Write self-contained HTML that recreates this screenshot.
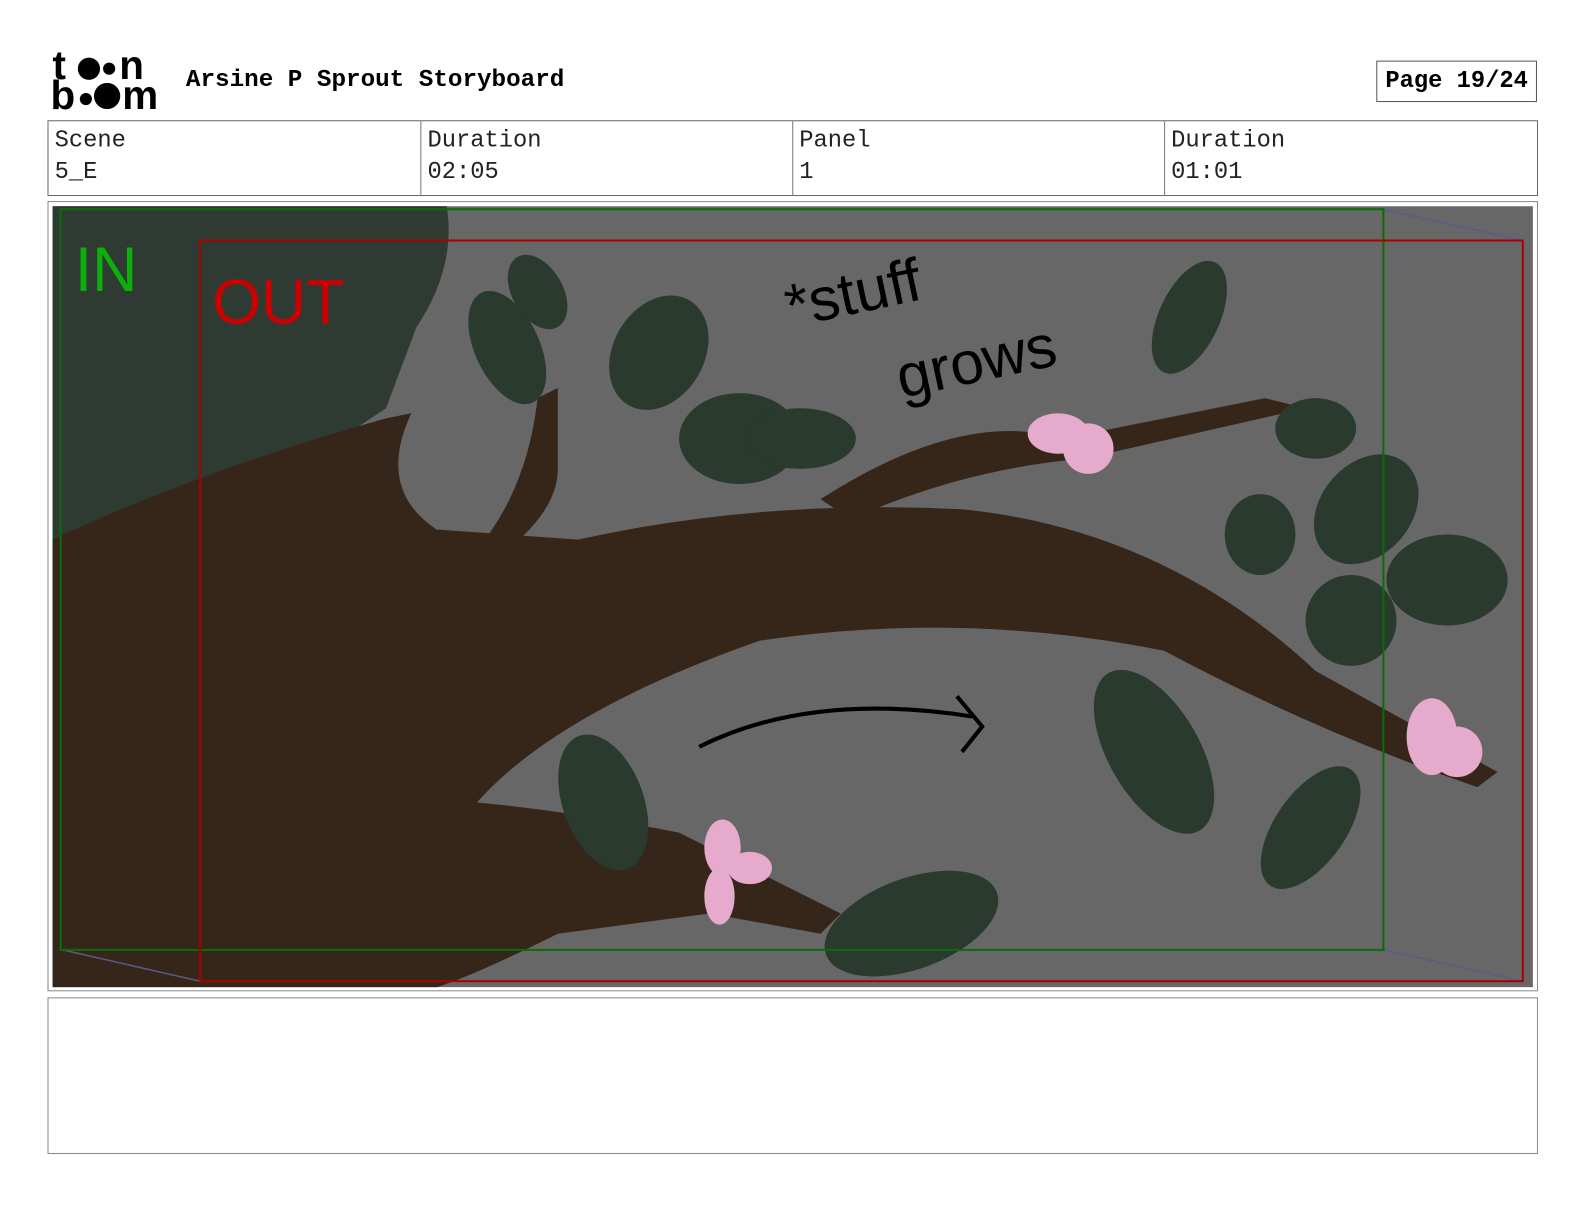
<!DOCTYPE html>
<html><head><meta charset="utf-8"><style>
body{margin:0;width:1584px;height:1224px;background:#fff;overflow:hidden}
#w{position:absolute;left:0;top:0;width:1568px;height:1212px;transform:scale(1.0105);transform-origin:0 0;font-family:"Liberation Mono",monospace}
.abs{position:absolute}
.cell{position:absolute;top:0;height:74px;border-left:1px solid #777;box-sizing:border-box;padding:4px 6px;font-size:23.5px;line-height:31px;color:#222}
</style></head><body><div id="w">
<svg class="abs" style="left:50px;top:48px" width="115" height="66">
<g font-family="Liberation Sans,sans-serif" font-weight="bold" font-size="40" fill="#000">
<text x="2" y="30">t</text><circle cx="38" cy="20" r="11"/><circle cx="58" cy="20" r="6"/><text x="68" y="30">n</text>
<text x="0" y="60">b</text><circle cx="35" cy="50" r="6"/><circle cx="56" cy="47" r="13"/><text x="71" y="60">m</text>
</g></svg>
<div class="abs" style="left:184px;top:66px;font-weight:bold;font-size:24px">Arsine P Sprout Storyboard</div>
<div class="abs" style="left:1362px;top:60px;width:159px;height:41px;border:1px solid #555;box-sizing:border-box;font-weight:bold;font-size:23.5px;line-height:39px;text-align:center">Page 19/24</div>
<div class="abs" style="left:47px;top:119px;width:1475px;height:75px;border:1px solid #666;box-sizing:border-box">
<div class="cell" style="left:0;width:369px;border:none">Scene<br>5_E</div>
<div class="cell" style="left:368px;width:369px">Duration<br>02:05</div>
<div class="cell" style="left:736px;width:369px">Panel<br>1</div>
<div class="cell" style="left:1104px;width:369px">Duration<br>01:01</div>
</div>
<div class="abs" style="left:47px;top:199px;width:1475px;height:782px;border:1px solid #888;box-sizing:border-box"></div>
<svg class="abs" style="left:52px;top:204px" width="1465" height="773" viewBox="0 0 1465 773">
<rect width="1465" height="773" fill="#676767"/>
<path d="M0 0H390Q400 60 360 120L330 200 180 300 0 390Z" fill="#2f3a33"/>
<path d="M0 773V330Q150 260 330 210L355 205Q320 280 380 320L520 330Q700 290 900 300Q1100 320 1250 460L1430 560 1410 575Q1250 520 1100 440Q900 400 700 430Q500 500 420 590Q520 600 620 620L780 700 760 720 650 700 500 720Q420 760 380 773Z" fill="#36261a"/>
<path d="M760 290Q900 200 1000 230L1200 190 1240 200 1020 250Q900 260 790 310Z" fill="#36261a"/>
<path d="M420 340Q470 280 480 190L500 180 500 260Q500 300 450 340Z" fill="#36261a"/>
<g fill="#2a3a2f">
<ellipse cx="450" cy="140" rx="32" ry="60" transform="rotate(-25 450 140)"/>
<ellipse cx="600" cy="145" rx="45" ry="60" transform="rotate(30 600 145)"/>
<ellipse cx="680" cy="230" rx="60" ry="45"/>
<ellipse cx="740" cy="230" rx="55" ry="30"/>
<ellipse cx="480" cy="85" rx="25" ry="40" transform="rotate(-30 480 85)"/>
<ellipse cx="1125" cy="110" rx="30" ry="60" transform="rotate(25 1125 110)"/>
<ellipse cx="1250" cy="220" rx="40" ry="30"/>
<ellipse cx="1300" cy="300" rx="45" ry="60" transform="rotate(40 1300 300)"/>
<ellipse cx="1195" cy="325" rx="35" ry="40"/>
<ellipse cx="1380" cy="370" rx="60" ry="45"/>
<ellipse cx="1285" cy="410" rx="45" ry="45"/>
<ellipse cx="1090" cy="540" rx="45" ry="90" transform="rotate(-30 1090 540)"/>
<ellipse cx="1245" cy="615" rx="35" ry="70" transform="rotate(35 1245 615)"/>
<ellipse cx="545" cy="590" rx="40" ry="70" transform="rotate(-20 545 590)"/>
<ellipse cx="850" cy="710" rx="90" ry="45" transform="rotate(-20 850 710)"/>
</g>
<g fill="#e6abcc">
<ellipse cx="995" cy="225" rx="30" ry="20"/><ellipse cx="1025" cy="240" rx="25" ry="25"/>
<ellipse cx="1365" cy="525" rx="25" ry="38"/><ellipse cx="1390" cy="540" rx="25" ry="25"/>
<ellipse cx="663" cy="635" rx="18" ry="28"/><ellipse cx="690" cy="655" rx="22" ry="16"/><ellipse cx="660" cy="683" rx="15" ry="28"/>
</g>
<path d="M640 535Q750 480 910 505M895 485L920 515 900 540" stroke="#000" stroke-width="4" fill="none"/>
<path d="M1315 3L1455 34M1317 736L1455 767M10 736L146 767" stroke="#5a5a8a" stroke-width="1.5"/>
<text x="730" y="120" font-family="Liberation Sans,sans-serif" font-size="60" transform="rotate(-12 730 120)" fill="#000">*stuff</text>
<text x="840" y="190" font-family="Liberation Sans,sans-serif" font-size="60" transform="rotate(-12 840 190)" fill="#000">grows</text>
<rect x="8" y="3" width="1309" height="733" fill="none" stroke="#0a6d0a" stroke-width="2"/>
<rect x="146" y="34" width="1309" height="733" fill="none" stroke="#a00" stroke-width="2"/>
<text x="22" y="84" font-family="Liberation Sans,sans-serif" font-size="62" fill="#0bb00b">IN</text>
<text x="158" y="116" font-family="Liberation Sans,sans-serif" font-size="62" fill="#c00">OUT</text>
</svg>
<div class="abs" style="left:47px;top:987px;width:1475px;height:155px;border:1px solid #888;box-sizing:border-box"></div>
</div></body></html>
